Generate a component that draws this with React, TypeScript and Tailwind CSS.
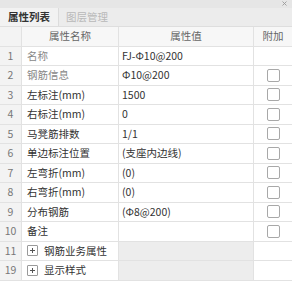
import React from "react";

const FONT = '"Noto Sans CJK SC", "Noto Sans", sans-serif';

type Row = { idx: string; name: string; value: string; check: boolean; group?: boolean; light?: boolean };

const rows: Row[] = [
  { idx: "1", name: "名称", value: "FJ-Φ10@200", check: false, light: true },
  { idx: "2", name: "钢筋信息", value: "Φ10@200", check: true, light: true },
  { idx: "3", name: "左标注(mm)", value: "1500", check: true },
  { idx: "4", name: "右标注(mm)", value: "0", check: true },
  { idx: "5", name: "马凳筋排数", value: "1/1", check: true },
  { idx: "6", name: "单边标注位置", value: "(支座内边线)", check: true },
  { idx: "7", name: "左弯折(mm)", value: "(0)", check: true },
  { idx: "8", name: "右弯折(mm)", value: "(0)", check: true },
  { idx: "9", name: "分布钢筋", value: "(Φ8@200)", check: true },
  { idx: "10", name: "备注", value: "", check: true },
  { idx: "11", name: "钢筋业务属性", value: "", check: false, group: true },
  { idx: "19", name: "显示样式", value: "", check: false, group: true },
];

function Checkbox() {
  return <div className="w-[13px] h-[13px] rounded-[2px] border border-[#a8a8a8] bg-white" />;
}

function PlusBox() {
  return (
    <div className="w-[11px] h-[11px] border border-[#9a9a9a] rounded-[1px] flex items-center justify-center bg-white">
      <svg width="7" height="7" viewBox="0 0 7 7">
        <path d="M3.5 1v5M1 3.5h5" stroke="#555" strokeWidth="1" />
      </svg>
    </div>
  );
}

export default function App() {
  return (
    <div className="w-[292px] h-[286px] bg-white overflow-hidden text-[10.5px]" style={{ fontFamily: FONT }}>
      <div className="h-[8px] bg-[#e6e6e6] flex justify-end items-start pr-[5px] pt-[1px]">
        <svg width="5" height="5" viewBox="0 0 5 5">
          <path d="M0.5 0.5l4 4M4.5 0.5l-4 4" stroke="#9a9a9a" strokeWidth="0.9" />
        </svg>
      </div>
      <div className="h-[19px] bg-[#ececec] flex items-stretch border-b border-[#dedede]">
        <div className="w-[59px] flex items-center justify-center bg-[#f2f2f2] border-r border-[#dcdcdc] text-[#333] font-semibold">
          属性列表
        </div>
        <div className="w-[56px] flex items-center justify-center text-[#b9b9b9]">图层管理</div>
      </div>
      <div className="grid grid-cols-[22px_97px_135px_38px]">
        <div className="h-[19.5px] bg-[#f3f3f3] border-r border-b border-[#e2e2e2]" />
        <div className="h-[19.5px] bg-[#f7f7f7] border-r border-b border-[#e2e2e2] flex items-center justify-center text-[#666]">属性名称</div>
        <div className="h-[19.5px] bg-[#f7f7f7] border-r border-b border-[#e2e2e2] flex items-center justify-center text-[#666]">属性值</div>
        <div className="h-[19.5px] bg-[#f7f7f7] border-b border-[#e2e2e2] flex items-center justify-center text-[#666]">附加</div>
        {rows.map((r) => (
          <React.Fragment key={r.idx}>
            <div className="h-[19.5px] bg-[#f3f3f3] border-r border-b border-[#e2e2e2] flex items-center justify-center text-[#777]">
              {r.idx}
            </div>
            <div
              className={
                "h-[19.5px] border-r border-b border-[#e2e2e2] flex items-center pl-[5px] gap-[6px] " +
                (r.light ? "text-[#888]" : "text-[#333]")
              }
            >
              {r.group && <PlusBox />}
              <span>{r.name}</span>
            </div>
            <div
              className={
                "h-[19.5px] border-r border-b border-[#e2e2e2] flex items-center pl-[3px] text-[#333] " +
                (r.group ? "bg-[#ededed]" : "bg-white")
              }
            >
              {r.value}
            </div>
            <div className="h-[19.5px] border-b border-[#e2e2e2] flex items-center justify-center">
              {r.check && <Checkbox />}
            </div>
          </React.Fragment>
        ))}
      </div>
    </div>
  );
}
